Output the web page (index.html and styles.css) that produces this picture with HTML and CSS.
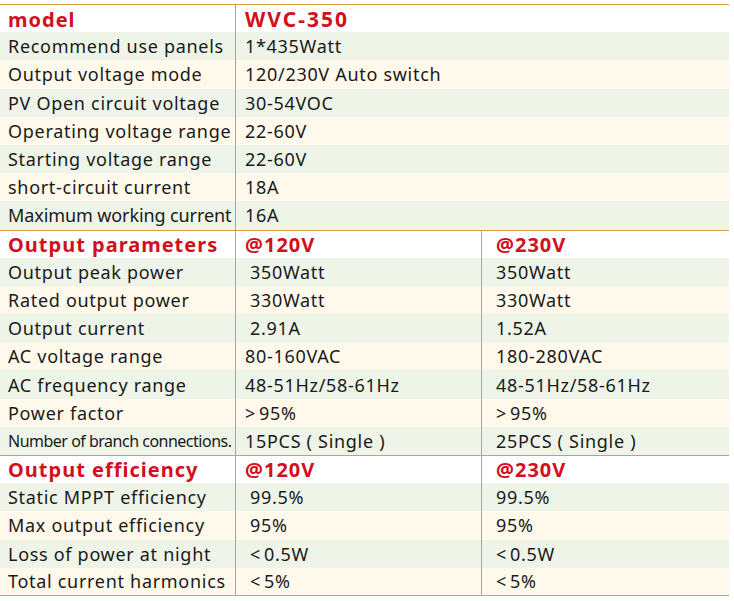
FILE: index.html
```html
<!DOCTYPE html>
<html>
<head>
<meta charset="utf-8">
<link rel="stylesheet" href="styles.css">
</head>
<body>
<div class="spec">
  <div class="row head first"><div class="c1">model</div><div class="c2 span wide">WVC-350</div></div>
  <div class="row g"><div class="c1">Recommend use panels</div><div class="c2 span">1*435Watt</div></div>
  <div class="row y"><div class="c1">Output voltage mode</div><div class="c2 span">120/230V Auto switch</div></div>
  <div class="row g"><div class="c1">PV Open circuit voltage</div><div class="c2 span">30-54VOC</div></div>
  <div class="row y"><div class="c1">Operating voltage range</div><div class="c2 span">22-60V</div></div>
  <div class="row g"><div class="c1">Starting voltage range</div><div class="c2 span">22-60V</div></div>
  <div class="row y"><div class="c1">short-circuit current</div><div class="c2 span">18A</div></div>
  <div class="row g"><div class="c1 tight">Maximum working current</div><div class="c2 span">16A</div></div>

  <div class="row head"><div class="c1">Output parameters</div><div class="c2">@120V</div><div class="c3">@230V</div></div>
  <div class="row g"><div class="c1">Output peak power</div><div class="c2 in">350Watt</div><div class="c3">350Watt</div></div>
  <div class="row y"><div class="c1">Rated output power</div><div class="c2 in">330Watt</div><div class="c3">330Watt</div></div>
  <div class="row g"><div class="c1">Output current</div><div class="c2 in">2.91A</div><div class="c3">1.52A</div></div>
  <div class="row y"><div class="c1">AC voltage range</div><div class="c2">80-160VAC</div><div class="c3">180-280VAC</div></div>
  <div class="row g"><div class="c1">AC frequency range</div><div class="c2">48-51Hz/58-61Hz</div><div class="c3">48-51Hz/58-61Hz</div></div>
  <div class="row y"><div class="c1">Power factor</div><div class="c2"><span class="sym">&gt;</span>95%</div><div class="c3"><span class="sym">&gt;</span>95%</div></div>
  <div class="row g"><div class="c1 narrow">Number of branch connections.</div><div class="c2">15PCS ( Single )</div><div class="c3">25PCS ( Single )</div></div>

  <div class="row head"><div class="c1">Output efficiency</div><div class="c2">@120V</div><div class="c3">@230V</div></div>
  <div class="row g"><div class="c1">Static MPPT efficiency</div><div class="c2 in">99.5%</div><div class="c3">99.5%</div></div>
  <div class="row y"><div class="c1">Max output efficiency</div><div class="c2 in">95%</div><div class="c3">95%</div></div>
  <div class="row g"><div class="c1">Loss of power at night</div><div class="c2 in"><span class="sym">&lt;</span>0.5W</div><div class="c3"><span class="sym">&lt;</span>0.5W</div></div>
  <div class="row y last"><div class="c1">Total current harmonics</div><div class="c2 in"><span class="sym">&lt;</span>5%</div><div class="c3"><span class="sym">&lt;</span>5%</div></div>
</div>
</body>
</html>
```

FILE: styles.css
```css
html, body {
  margin: 0;
  padding: 0;
  background: #ffffff;
}
body {
  padding-top: 4px;
  font-family: "Noto Sans", "DejaVu Sans", sans-serif;
  color: #1a1a1a;
}
.spec {
  width: 729px;
}
.row {
  display: grid;
  grid-template-columns: 236px 245px 248px;
  height: 28.2px;
  box-sizing: border-box;
  align-items: center;
  font-size: 18px;
  letter-spacing: 0.7px;
}
.row > div {
  height: 100%;
  display: flex;
  align-items: center;
  box-sizing: border-box;
  white-space: nowrap;
}
.c1 {
  padding-left: 8px;
  border-right: 1px solid #a6a6a6;
}
.c2 {
  padding-left: 9px;
}
.c2.in {
  padding-left: 14px;
}
.c2.span {
  grid-column: 2 / 4;
}
.c3 {
  padding-left: 14px;
  border-left: 1px solid #a6a6a6;
}
.g { background: #eef4e7; }
.y { background: #fef9ea; }
.head {
  background: #ffffff;
  border-top: 1.5px solid #dc9c44;
  color: #d2101c;
  font-weight: 700;
  font-size: 20px;
  letter-spacing: 1px;
}
.head .wide {
  font-size: 21px;
  letter-spacing: 2px;
}
.last {
  border-bottom: 1.5px solid #dc9c44;
}
.tight {
  letter-spacing: -0.1px;
}
.narrow {
  font-size: 16px;
  letter-spacing: -0.5px;
}
.sym {
  margin-right: 3px;
}
```
